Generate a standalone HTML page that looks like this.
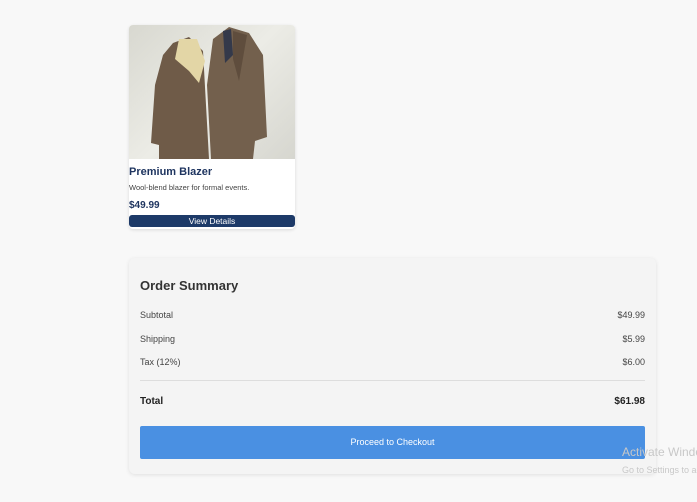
<!DOCTYPE html>
<html><head><style>
body{margin:0;width:697px;height:502px;background:#f8f8f8;font-family:"Liberation Sans",sans-serif;position:relative;overflow:hidden}
.card{position:absolute;left:129px;top:25px;width:166px;height:204px;background:#fff;border-radius:4px;overflow:hidden;box-shadow:0 1px 3px rgba(0,0,0,.12)}
.img{position:absolute;left:0;top:0;width:166px;height:134px;background:linear-gradient(135deg,#d8d8d0,#ecece6 50%,#d6d6cf)}
.t{position:absolute;left:0;white-space:nowrap}
.sum{position:absolute;left:129px;top:258px;width:527px;height:216px;background:#f4f4f4;border-radius:6px;box-shadow:0 1px 4px rgba(0,0,0,.1)}
.row{position:absolute;left:11px;right:11px;font-size:9px;color:#444;display:flex;justify-content:space-between}
</style></head><body>
<div class="card">
 <div class="img">
  <svg width="166" height="134" viewBox="0 0 166 134">
   <path d="M44 18 L60 12 L74 26 L80 134 L30 134 L30 120 L22 118 L26 60 L34 30 Z" fill="#6f5b48"/>
   <path d="M50 14 L68 14 L76 36 L70 58 L60 46 L46 34 Z" fill="#e3d6a6"/>
   <path d="M84 14 L100 2 L120 8 L134 30 L138 112 L126 116 L124 134 L82 134 L78 60 Z" fill="#73604d"/>
   <path d="M94 6 L102 4 L104 30 L96 38 Z" fill="#34394a"/>
   <path d="M104 6 L118 10 L110 56 L104 34 Z" fill="#5f4d3d"/>
  </svg>
 </div>
 <div class="t" style="left:0;top:141px;font-size:11px;font-weight:bold;color:#1f3560">Premium Blazer</div>
 <div class="t" style="left:0;top:158px;font-size:7.5px;color:#444">Wool-blend blazer for formal events.</div>
 <div class="t" style="left:0;top:175px;font-size:10px;font-weight:bold;color:#1f3560">$49.99</div>
 <div style="position:absolute;left:0;top:190px;width:166px;height:12px;background:#1d3a68;border-radius:3px;color:#fff;font-size:8.5px;text-align:center;line-height:12px">View Details</div>
</div>
<div class="sum">
 <div class="t" style="left:11px;top:20px;font-size:13px;font-weight:bold;color:#333">Order Summary</div>
 <div class="row" style="top:52px"><span>Subtotal</span><span>$49.99</span></div>
 <div class="row" style="top:76px"><span>Shipping</span><span>$5.99</span></div>
 <div class="row" style="top:99px"><span>Tax (12%)</span><span>$6.00</span></div>
 <div style="position:absolute;left:11px;right:11px;top:122px;height:1px;background:#ddd"></div>
 <div class="row" style="top:138px;font-size:10px;font-weight:bold;color:#222"><span>Total</span><span>$61.98</span></div>
 <div style="position:absolute;left:11px;right:11px;top:168px;height:33px;background:#4a90e2;border-radius:2px;color:#fff;font-size:9px;text-align:center;line-height:33px">Proceed to Checkout</div>
</div>
<div class="t" style="left:622px;top:445px;font-size:12px;color:#c8c8c8">Activate Windo</div>
<div class="t" style="left:622px;top:465px;font-size:9px;color:#c8c8c8">Go to Settings to ac</div>
</body></html>
